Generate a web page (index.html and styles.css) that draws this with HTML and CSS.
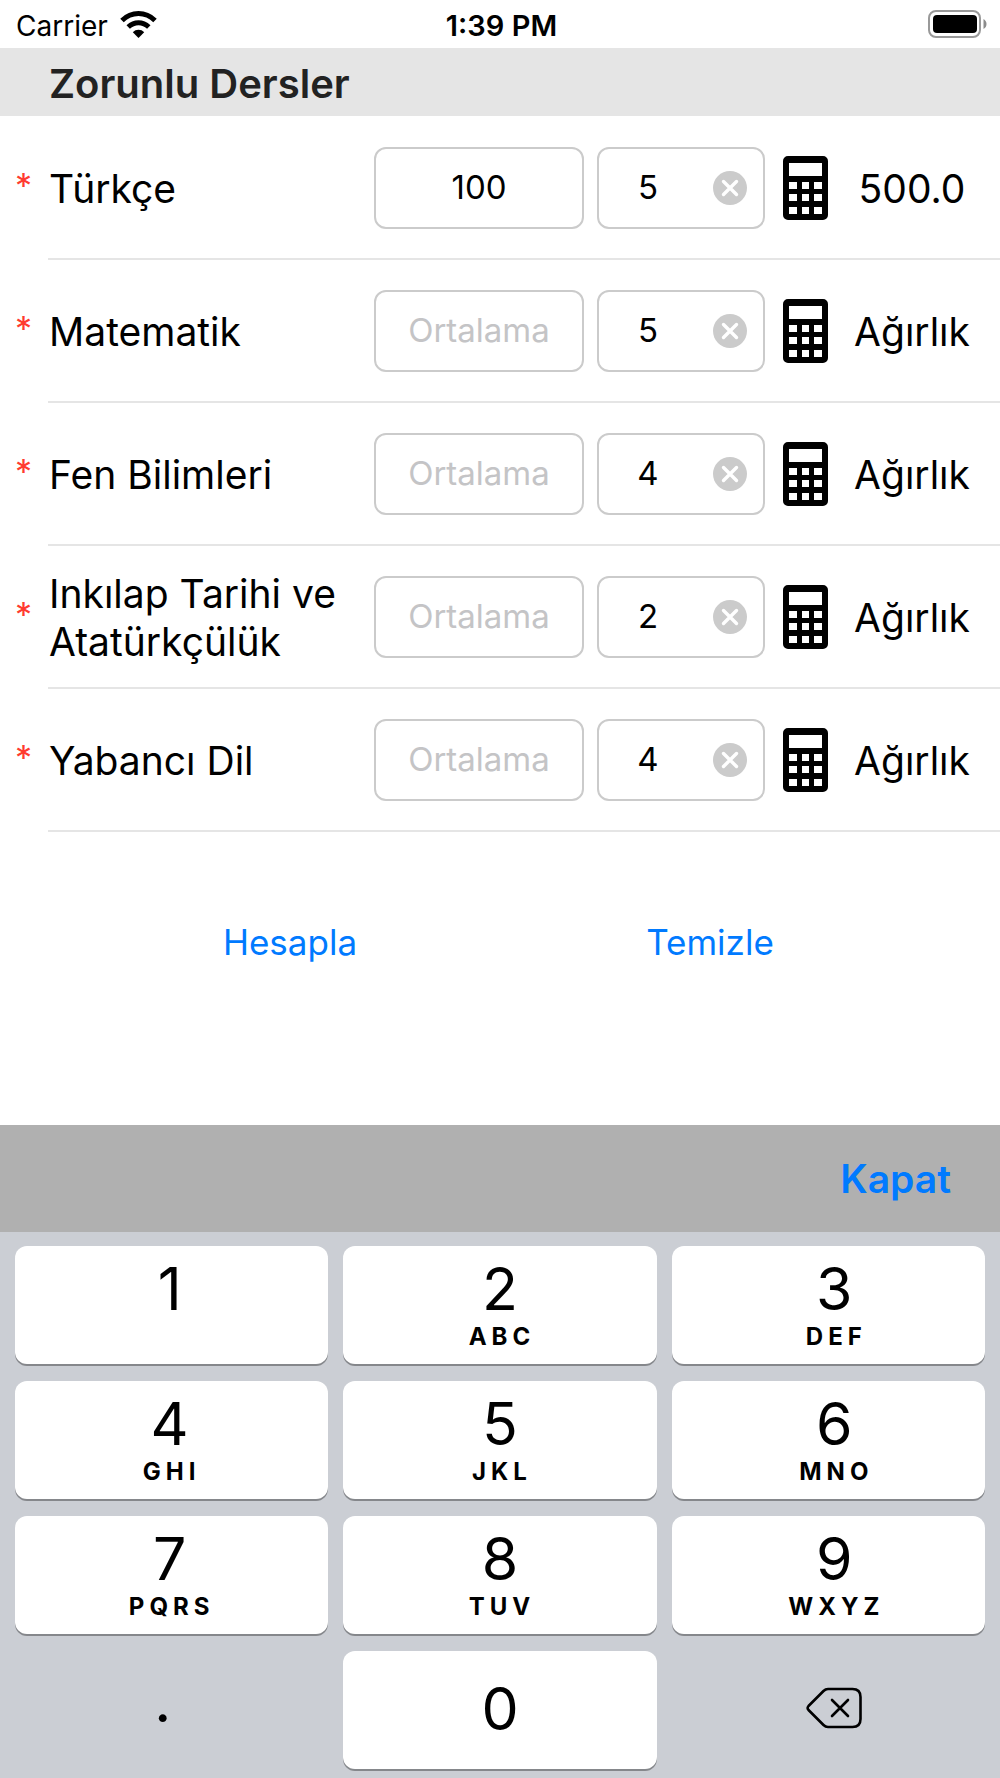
FILE: index.html
```html
<!DOCTYPE html>
<html lang="tr">
<head>
<meta charset="utf-8">
<meta name="viewport" content="width=device-width, initial-scale=1">
<title>Zorunlu Dersler</title>
<link rel="stylesheet" href="styles.css">
</head>
<body>
<svg class="defs" aria-hidden="true">
  <symbol id="calculator" viewBox="0 0 45 64">
    <path fill-rule="evenodd" d="M5 0H40a5 5 0 0 1 5 5V59a5 5 0 0 1-5 5H5a5 5 0 0 1-5-5V5a5 5 0 0 1 5-5ZM6 7V20H39V7ZM6 26v7h8v-7ZM19 26v7h7v-7ZM31 26v7h8v-7ZM6 38v7h8v-7ZM19 38v7h7v-7ZM31 38v7h8v-7ZM6 51v7h8v-7ZM19 51v7h7v-7ZM31 51v7h8v-7Z"/>
  </symbol>
  <symbol id="clear" viewBox="0 0 34 34">
    <circle cx="17" cy="17" r="17" fill="#cbcbcb"/>
    <path d="M10.500 10.500 23.500 23.500M23.500 10.500 10.500 23.500" stroke="#fff" stroke-width="3.400" stroke-linecap="round"/>
  </symbol>
</svg>
<div class="app">
  <header class="status">
    <div class="carrier">
      <span>Carrier</span>
      <svg width="37" height="27" viewBox="0 0 37 27" aria-hidden="true">
        <path d="M2 9.500C11.500 .2 25.500 .2 35 9.500" fill="none" stroke="#000" stroke-width="5"/>
        <path d="M8.200 16C14.300 10.300 22.700 10.300 28.800 16" fill="none" stroke="#000" stroke-width="5"/>
        <path d="M18.500 27 12.800 21.300C15.800 18 21.200 18 24.200 21.300Z"/>
      </svg>
    </div>
    <span class="time">1:39 PM</span>
    <svg class="battery" width="59" height="28" viewBox="0 0 59 28" aria-hidden="true">
      <rect x="1" y="1" width="51" height="26" rx="7" fill="none" stroke="#999" stroke-width="2"/>
      <rect x="5" y="5" width="44" height="18" rx="4"/>
      <path d="M55.500 9c4 2 4 8 0 10Z" fill="#8c8c8c"/>
    </svg>
  </header>

  <main>
    <h1 class="section-title">Zorunlu Dersler</h1>
    <ul class="courses">
      <li class="course">
        <span class="required">*</span>
        <div class="course-body">
          <label class="name" for="avg1">Türkçe</label>
          <input class="field average" id="avg1" inputmode="decimal" placeholder="Ortalama" value="100">
          <div class="field hours"><input aria-label="Türkçe ders saati" inputmode="numeric" value="5"><button class="icon-button" aria-label="Sil"><svg width="34" height="34"><use href="#clear"/></svg></button></div>
          <button class="icon-button calc" aria-label="Hesap makinesi"><svg width="45" height="64"><use href="#calculator"/></svg></button>
          <output class="weight">500.0</output>
        </div>
      </li>
      <li class="course">
        <span class="required">*</span>
        <div class="course-body">
          <label class="name" for="avg2">Matematik</label>
          <input class="field average" id="avg2" inputmode="decimal" placeholder="Ortalama">
          <div class="field hours"><input aria-label="Matematik ders saati" inputmode="numeric" value="5"><button class="icon-button" aria-label="Sil"><svg width="34" height="34"><use href="#clear"/></svg></button></div>
          <button class="icon-button calc" aria-label="Hesap makinesi"><svg width="45" height="64"><use href="#calculator"/></svg></button>
          <output class="weight">Ağırlık</output>
        </div>
      </li>
      <li class="course">
        <span class="required">*</span>
        <div class="course-body">
          <label class="name" for="avg3">Fen Bilimleri</label>
          <input class="field average" id="avg3" inputmode="decimal" placeholder="Ortalama">
          <div class="field hours"><input aria-label="Fen Bilimleri ders saati" inputmode="numeric" value="4"><button class="icon-button" aria-label="Sil"><svg width="34" height="34"><use href="#clear"/></svg></button></div>
          <button class="icon-button calc" aria-label="Hesap makinesi"><svg width="45" height="64"><use href="#calculator"/></svg></button>
          <output class="weight">Ağırlık</output>
        </div>
      </li>
      <li class="course">
        <span class="required">*</span>
        <div class="course-body">
          <label class="name" for="avg4">Inkılap Tarihi ve Atatürkçülük</label>
          <input class="field average" id="avg4" inputmode="decimal" placeholder="Ortalama">
          <div class="field hours"><input aria-label="Inkılap Tarihi ders saati" inputmode="numeric" value="2"><button class="icon-button" aria-label="Sil"><svg width="34" height="34"><use href="#clear"/></svg></button></div>
          <button class="icon-button calc" aria-label="Hesap makinesi"><svg width="45" height="64"><use href="#calculator"/></svg></button>
          <output class="weight">Ağırlık</output>
        </div>
      </li>
      <li class="course">
        <span class="required">*</span>
        <div class="course-body">
          <label class="name" for="avg5">Yabancı Dil</label>
          <input class="field average" id="avg5" inputmode="decimal" placeholder="Ortalama">
          <div class="field hours"><input aria-label="Yabancı Dil ders saati" inputmode="numeric" value="4"><button class="icon-button" aria-label="Sil"><svg width="34" height="34"><use href="#clear"/></svg></button></div>
          <button class="icon-button calc" aria-label="Hesap makinesi"><svg width="45" height="64"><use href="#calculator"/></svg></button>
          <output class="weight">Ağırlık</output>
        </div>
      </li>
    </ul>
    <div class="actions">
      <button class="link-button">Hesapla</button>
      <button class="link-button">Temizle</button>
    </div>
  </main>

  <footer class="keyboard">
    <div class="toolbar"><button class="done">Kapat</button></div>
    <div class="keys">
      <button class="key"><span class="digit">1</span><span class="letters"></span></button>
      <button class="key"><span class="digit">2</span><span class="letters">ABC</span></button>
      <button class="key"><span class="digit">3</span><span class="letters">DEF</span></button>
      <button class="key"><span class="digit">4</span><span class="letters">GHI</span></button>
      <button class="key"><span class="digit">5</span><span class="letters">JKL</span></button>
      <button class="key"><span class="digit">6</span><span class="letters">MNO</span></button>
      <button class="key"><span class="digit">7</span><span class="letters">PQRS</span></button>
      <button class="key"><span class="digit">8</span><span class="letters">TUV</span></button>
      <button class="key"><span class="digit">9</span><span class="letters">WXYZ</span></button>
      <button class="key plain point"><span class="digit">.</span></button>
      <button class="key zero"><span class="digit">0</span></button>
      <button class="key plain" aria-label="Geri sil">
        <svg width="56" height="42" viewBox="0 0 56 42" fill="none" stroke="#000" stroke-width="2.600" stroke-linecap="round" stroke-linejoin="round" aria-hidden="true">
          <path d="M22 2H46.500Q54.500 2 54.500 10V32Q54.500 40 46.500 40H22Q19.500 40 17.500 38L2.500 23Q.8 21 2.500 19L17.500 4Q19.500 2 22 2Z"/>
          <path d="M26 13 42 29M42 13 26 29"/>
        </svg>
      </button>
    </div>
  </footer>
</div>
</body>
</html>
```
FILE: styles.css
```css
* { box-sizing: border-box; }

body {
  margin: 0;
  background: #fff;
  color: #000;
  font-family: Inter, "Liberation Sans", sans-serif;
}

button, input {
  margin: 0;
  padding: 0;
  border: 0;
  background: none;
  color: inherit;
  font: inherit;
}

.defs { display: none; }

.app {
  display: flex;
  flex-direction: column;
  min-height: 100vh;
}

/* Status bar */
.status {
  display: grid;
  grid-template-columns: 1fr auto 1fr;
  align-items: center;
  height: 48px;
  padding: 0 13px 0 16px;
  font-size: 28px;
}
.status span { padding-top: 3px; }
.carrier {
  display: flex;
  align-items: center;
  gap: 12px;
}
.time {
  font-size: 29px;
  font-weight: 600;
}
.battery { justify-self: end; }

/* Course list */
.section-title {
  margin: 0;
  padding: 4px 49px 0;
  background: #e5e5e5;
  color: #222;
  font-size: 40px;
  font-weight: 600;
  line-height: 64px;
}
.courses {
  margin: 0;
  padding: 1px 0 0;
  list-style: none;
}
.course { display: flex; }
.required {
  width: 48px;
  padding-left: 15px;
  color: #ff3b30;
  font-size: 34px;
  line-height: 138px;
}
.course-body {
  display: flex;
  flex: 1;
  align-items: center;
  min-height: 143px;
  padding-right: 16px;
  border-bottom: 2px solid #e5e5e5;
}
.name {
  flex: 1;
  padding: 2px 0 0 1px;
  font-size: 39px;
  line-height: 48px;
}
.field {
  height: 82px;
  border: 2px solid #cbcbcb;
  border-radius: 12px;
  font-size: 33px;
  text-align: center;
}
.average {
  width: 210px;
  margin-right: 13px;
  padding-bottom: 2px;
}
.average::placeholder { color: #c4c4c6; }
.hours {
  display: flex;
  align-items: center;
  width: 168px;
  padding-right: 16px;
}
.hours input {
  flex: 1;
  min-width: 0;
  padding: 0 16px 2px 0;
  text-align: center;
}
.icon-button { display: flex; }
.calc { margin: 0 12px 0 18px; }
.weight {
  width: 144px;
  padding-top: 2px;
  font-size: 39px;
  text-align: center;
}

.actions {
  display: grid;
  grid-template-columns: 1fr 1fr;
  justify-items: center;
  padding: 86px 80px;
}
.link-button {
  color: #007aff;
  font-size: 35px;
  line-height: 48px;
}

/* Numeric keyboard */
.keyboard {
  margin-top: auto;
  background: #cbced4;
}
.toolbar {
  display: flex;
  align-items: center;
  justify-content: flex-end;
  height: 107px;
  padding: 0 49px;
  background: #b0b0b0;
}
.done {
  color: #007aff;
  font-size: 39px;
  font-weight: 600;
}
.keys {
  display: grid;
  grid-template-columns: repeat(3, 1fr);
  gap: 17px 15px;
  padding: 14px 15px 9px;
}
.key {
  display: flex;
  flex-direction: column;
  align-items: center;
  height: 118px;
  padding: 13px 4px 0 0;
  border-radius: 12px;
  background: #fff;
  box-shadow: 0 2px 0 #85878b;
}
.key:nth-child(3n+2) { padding-right: 0; }
.key:nth-child(3n) { padding: 13px 0 0 12px; }
.digit {
  font-size: 59px;
  line-height: 60px;
}
.letters {
  padding-left: 4px;
  font-size: 24px;
  font-weight: 700;
  line-height: 36px;
  letter-spacing: 5px;
}
.key.zero { padding-top: 28px; }
.key.plain {
  justify-content: center;
  padding-top: 0;
  padding-bottom: 4px;
  background: none;
  box-shadow: none;
}
.key.point { padding: 0 18px 18px 0; }
```
